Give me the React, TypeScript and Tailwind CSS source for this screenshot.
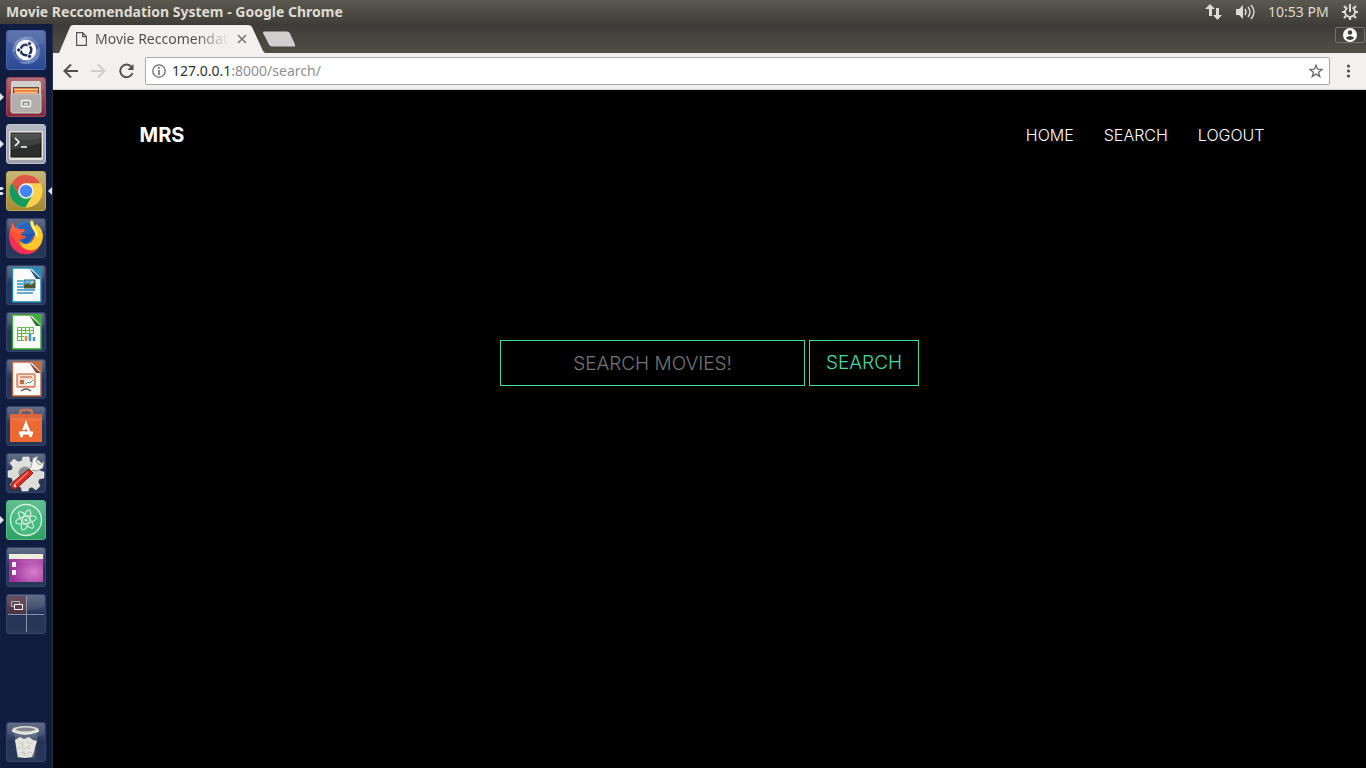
import type { ReactNode } from 'react';

type Launcher = { name: string; tile: string; art: ReactNode; running?: number; active?: boolean };

const dark = 'bg-linear-to-b from-[#56617d] via-[#25345a] to-[#293857] border-[#34456b]';

function Paper({ color, edge }: { color: string; edge: string }) {
  return (
    <>
      <path d="M6.5 3H27l8 9v25H6.5z" fill="#fafafa" stroke={color} strokeWidth="1.4" />
      <path d="M24 2h12v12z" fill={color} />
      <path d="M23 3l12 11h-5z" fill={edge} />
    </>
  );
}

const launchers: Launcher[] = [
  {
    name: 'Dash',
    tile: 'bg-linear-to-b from-[#526aa5] to-[#2b4995] border-[#4a66ac]',
    art: (
      <>
        <path d="M7 23C5 10 17 4 29 8 19 7 13 12 12 20zM33 17c4 14-9 21-21 15 10 1 15-3 17-11z" fill="#8fa8d5" opacity=".6" />
        <path d="M14 9c10-6 20 2 20 12-2-7-7-10-12-10zM26 31C15 36 6 28 6 18c3 8 8 10 13 11z" fill="#8fa8d5" opacity=".4" />
        <circle cx="20" cy="20" r="10.3" fill="#fff" />
        <circle cx="20" cy="20" r="5.3" fill="none" stroke="#1d3160" strokeWidth="2.5" strokeDasharray="9.6 1.5" strokeDashoffset="4.8" />
        <g fill="#1d3160" stroke="#fff" strokeWidth=".8">
          <circle cx="12.7" cy="20" r="2.1" />
          <circle cx="23.5" cy="13.7" r="2.1" />
          <circle cx="23.5" cy="26.3" r="2.1" />
        </g>
      </>
    ),
  },
  {
    name: 'Files',
    tile: 'bg-linear-to-b from-[#a9606d] to-[#83293c] border-[#a14958]',
    running: 1,
    art: (
      <>
        <path d="M7 4h26q2 0 2 3v28H5V7q0-3 2-3z" fill="#cfccc8" />
        <path d="M7 10h26v8H7z" fill="#5c3c2c" />
        <path d="M8 11h24v6H8z" fill="#e97831" />
        <path d="M8 12.5h24M9 15.5h22" stroke="#ffc68e" strokeWidth="1.2" />
        <path d="M5 17h30v17q0 2-2 2H7q-2 0-2-2z" fill="#b1aeab" stroke="#d0ccc7" />
        <rect x="15.5" y="23.5" width="9" height="6" rx="1" fill="#999" stroke="#f4f4f4" strokeWidth="1.4" />
        <path d="M18 27h4" stroke="#eee" strokeWidth="1.5" />
      </>
    ),
  },
  {
    name: 'Terminal',
    tile: 'bg-linear-to-b from-[#aeb2bc] to-[#9d9faa] border-[#bfc2c9]',
    running: 1,
    art: (
      <>
        <rect x="3" y="7" width="34" height="29" rx="2" fill="#e4e3df" />
        <rect x="5" y="9" width="30" height="24" fill="#2b2d2d" stroke="#111" />
        <path d="M5 9h30v10L5 26z" fill="#fff" opacity=".1" />
        <path d="M9 14l4 4-4 4M15 23h6" fill="none" stroke="#fff" strokeWidth="1.6" />
      </>
    ),
  },
  {
    name: 'Google Chrome',
    tile: 'bg-linear-to-b from-[#c0b06f] to-[#a58a32] border-[#c1a957]',
    running: 2,
    active: true,
    art: (
      <>
        <circle cx="20" cy="20" r="16.5" fill="#fbd04b" />
        <path d="M5.7 11.7A16.5 16.5 0 0 1 34.5 12.5H20L13 24z" fill="#df4938" />
        <path d="M5.7 11.7A16.5 16.5 0 0 0 19.5 36.5L27 24H13z" fill="#159b5c" />
        <path d="M20 12.5h14.5A16.5 16.5 0 0 1 19.5 36.5L27 23z" fill="#fbd04b" />
        <circle cx="20" cy="20" r="7.7" fill="#f4f4ee" />
        <circle cx="20" cy="20" r="6.2" fill="#4285f4" />
      </>
    ),
  },
  {
    name: 'Firefox',
    tile: dark,
    art: (
      <>
        <circle cx="20" cy="17" r="13" fill="#1478d4" />
        <path d="M12 8q7-5 14-2l3 11-9 9-7-6z" fill="#1d55b0" />
        <path d="M6 4l-1 6C2 15 3 23 5 27c4 7 11 10 17 9 8-1 13-7 14-15l-9-4c0 7-4 10-9 9-3-1-4-3-4-5 2 1 4 0 6-2-1-2-3-1-5-2 0-2 2-3 4-4-1-2-3-2-6-2-2-1-4-1-5-4z" fill="#ff5230" />
        <path d="M4 14c-2 8 1 16 6 19 6 4 13 4 18 1-9 0-18-7-24-20z" fill="#f52e57" />
        <path d="M26 2c-3 5 1 8 3 12 1 6-3 12-10 12-2 0-4-1-5-3 0 6 5 9 11 9 8 0 12-7 12-15-1-6-4-9-7-11l-1 3z" fill="#ffc72b" />
        <path d="M26 3c-2 6 6 9 5 16" stroke="#fff04e" strokeWidth="3" fill="none" />
      </>
    ),
  },
  {
    name: 'LibreOffice Writer',
    tile: dark,
    art: (
      <>
        <Paper color="#1783af" edge="#124d70" />
        <path d="M11 16h6M11 19h6M11 22h6M11 25h18M11 28h16" stroke="#3390bb" strokeWidth="1.5" />
        <path d="M18 15h11v8H18z" fill="#69b7df" stroke="#25617f" />
        <path d="M18 23v-3l4-2 3 2 4-3v6z" fill="#4b592d" />
        <circle cx="26" cy="17" r="1" fill="#ffe86b" />
      </>
    ),
  },
  {
    name: 'LibreOffice Calc',
    tile: dark,
    art: (
      <>
        <Paper color="#32a52c" edge="#17691c" />
        <path d="M11.5 15.5h16v13h-16zM11 18.5h17M11 21.5h17M11 24.5h17M15.5 15v13M19.5 15v13M23.5 15v13" fill="#eef8e9" stroke="#62b64a" />
        <path d="M18 22h12v8H18z" fill="#f6f8f6" />
        <path d="M20 24v5" stroke="#e48838" strokeWidth="2.5" />
        <path d="M24 22v7" stroke="#3b98d0" strokeWidth="2.5" />
        <path d="M28 25v4" stroke="#5292b6" strokeWidth="2.5" />
      </>
    ),
  },
  {
    name: 'LibreOffice Impress',
    tile: dark,
    art: (
      <>
        <Paper color="#b66039" edge="#753a23" />
        <rect x="11" y="15" width="18" height="13" rx="1" fill="#f5ddcf" stroke="#d17a50" strokeWidth="1.4" />
        <path d="M14 18h12" stroke="#b75c32" />
        <path d="M14 21h4v4h-4z" fill="#bd6a45" />
        <path d="M20 21h7v5h-7z" fill="#fff" />
        <path d="M20 25l2-2 2 1 3-3" stroke="#3b9b6e" fill="none" />
        <path d="M15 32q5-4 10 0" stroke="#5a5a5a" fill="none" strokeWidth="1.3" />
      </>
    ),
  },
  {
    name: 'Ubuntu Software',
    tile: dark,
    art: (
      <>
        <path d="M14 11V7q0-3 3-3h6q3 0 3 3v4" fill="none" stroke="#cf6741" strokeWidth="2.4" />
        <path d="M4 8h32v28H4z" fill="#ec6a31" />
        <path d="M4 8h32v4H4z" fill="#d95830" />
        <path d="M15 31l5-13 5 13M13 27h14" fill="none" stroke="#fff" strokeWidth="2.8" />
        <path d="M13 24.5h8" stroke="#ec6a31" />
      </>
    ),
  },
  {
    name: 'System Settings',
    tile: dark,
    art: (
      <>
        <path d="M17 4h6l1 5 4 1 4-3 4 4-3 4 1 3 4 1v6l-5 1-1 3 2 4-4 4-4-3-3 1-1 3h-6l-1-4-4-1-3 3-4-4 3-4-1-3-4-1v-6l4-1 1-3-3-4 4-4 4 3 4-1z" fill="#deded9" stroke="#fff" strokeWidth=".5" />
        <circle cx="19" cy="20" r="6.5" fill="#8b8d94" />
        <path d="M25 14l2-9 5-2-2 6 4 3 4-4-1 7-6 3-4-1-3 3-3-3z" fill="#f1f1ee" stroke="#777" strokeWidth=".7" />
        <path d="M23 16l4 4L10 36q-4 1-5-3 0-2 2-4z" fill="#d92c24" stroke="#801712" />
        <path d="M22 19L8 32" stroke="#ff8279" strokeWidth="1.4" />
        <circle cx="9" cy="33" r="1.2" fill="#eee" />
      </>
    ),
  },
  {
    name: 'Atom',
    tile: 'bg-linear-to-b from-[#53b988] to-[#2fa165] border-[#4fbd84]',
    running: 1,
    art: (
      <>
        <circle cx="20" cy="20" r="15.5" fill="#45b981" stroke="#d7f3de" strokeWidth="1.3" />
        <g fill="none" stroke="#d7f3de" strokeWidth="1.1">
          <ellipse cx="20" cy="20" rx="10.5" ry="3.6" transform="rotate(-12 20 20)" />
          <ellipse cx="20" cy="20" rx="10.5" ry="3.6" transform="rotate(48 20 20)" />
          <ellipse cx="20" cy="20" rx="10.5" ry="3.6" transform="rotate(108 20 20)" />
        </g>
        <circle cx="20" cy="20" r="1.5" fill="#e7fbec" />
      </>
    ),
  },
  {
    name: 'Desktop window',
    tile: dark,
    art: (
      <>
        <defs>
          <radialGradient id="wallpaper" cx=".72" cy=".65" r=".65">
            <stop stopColor="#d87fcc" />
            <stop offset="1" stopColor="#9b3399" />
          </radialGradient>
        </defs>
        <path d="M3 7h34v28H3z" fill="url(#wallpaper)" />
        <path d="M3 7h34v5H3z" fill="#eeecd8" />
        <path d="M6 15h4v5H6zM6 23h4v5H6z" fill="#faf1fa" />
      </>
    ),
  },
  {
    name: 'Workspace Switcher',
    tile: dark,
    art: (
      <>
        <path d="M2 2h18v18H2z" fill="#5d3441" opacity=".75" />
        <path d="M20.5 2v36M2 20.5h36" stroke="#8a94a7" />
        <path d="M5.5 7.5h8v5h-8z" fill="none" stroke="#aaa" />
        <path d="M8.5 10.5h8v5h-8z" fill="#4d303c" stroke="#fff" />
      </>
    ),
  },
];

const trash: Launcher = {
  name: 'Trash',
  tile: dark,
  art: (
    <>
      <path d="M8 9h24l-3 27H11z" fill="#858e99" opacity=".4" />
      <path d="M9 18l5-3 4 2 5-2 4 3 4 1-2 6-1 5-2 5-7 1-7-1-1-5z" fill="#e5e4df" />
      <path d="M12 20l3 2 3-2M20 19l3 3 4-2M12 26l3-1 2 3 4-3 4 2M14 31l3-1 2 3 4-3 3 1M17 22v3M24 23l-2 4M18 30v4" stroke="#bdbebb" strokeWidth=".8" fill="none" />
      <ellipse cx="19.5" cy="8" rx="13.5" ry="4" fill="#d7d8d2" />
      <ellipse cx="19.5" cy="7.4" rx="9.5" ry="1.8" fill="#777c81" />
      <path d="M6 9q13 6 27 0" stroke="#f4f4ee" strokeWidth="1.3" fill="none" />
    </>
  ),
};

function LauncherButton({ item }: { item: Launcher }) {
  return (
    <div className="relative px-1.5">
      {item.running && (
        <svg className="absolute left-0 top-4 h-2 w-1" viewBox="0 0 4 8" fill="#dfe3ea" aria-hidden="true">
          {item.running === 2 ? <path d="M0 0h2l2 1.5L2 3H0zM0 5h2l2 1.5L2 8H0z" /> : <path d="M0 0l4 4-4 4z" />}
        </svg>
      )}
      <button aria-label={item.name} className={`block size-10 overflow-hidden rounded-[3px] border ${item.tile}`}>
        <svg className="-m-px size-10" viewBox="0 0 40 40" aria-hidden="true">
          {item.art}
          <path d="M2 1h36v12Q20 20 2 12z" fill="#fff" opacity=".08" />
        </svg>
      </button>
      {item.active && (
        <svg className="absolute right-0 top-4 h-2 w-1" viewBox="0 0 4 8" fill="#dfe3ea" aria-hidden="true">
          <path d="M4 0L0 4l4 4z" />
        </svg>
      )}
    </div>
  );
}

function SystemBar() {
  return (
    <header className="flex h-6 items-center justify-between bg-linear-to-b from-[#5b594f] to-[#3f3e39] pl-1.5 pr-2 text-[#dfdbd2]">
      <h1 className="whitespace-nowrap text-sm font-bold">Movie Reccomendation System - Google Chrome</h1>
      <div className="flex items-center">
        <button aria-label="Network">
          <svg className="h-4 w-[18px]" viewBox="0 0 18 16" fill="currentColor">
            <path d="M5 0l5 5H7v7H4V5H0z" />
            <path d="M11 4h3v7h3l-4.5 5L8 11h3z" />
          </svg>
        </button>
        <button aria-label="Volume" className="ml-3">
          <svg className="h-4 w-[21px]" viewBox="0 0 21 16" fill="none" stroke="currentColor">
            <path d="M1 5h3l4-4v14l-4-4H1z" fill="currentColor" stroke="none" />
            <path d="M10 5q2 3 0 6" strokeWidth="1.4" />
            <path d="M13 3q4 5 0 10" strokeWidth="1.4" />
            <path d="M16 1q6 7 0 14" strokeWidth="1.4" />
          </svg>
        </button>
        <time className="ml-3 w-[62px] whitespace-nowrap text-sm">10:53 PM</time>
        <button aria-label="Session" className="ml-3">
          <svg className="size-4" viewBox="0 0 16 16" fill="none" stroke="currentColor">
            <path d="M5.5 3.6a5 5 0 1 0 5 0" strokeWidth="1.8" />
            <path d="M8 0v8" strokeWidth="2" />
            <path d="M2 2l2 2M14 2l-2 2M0 8h3M13 8h3M2 14l2-2M14 14l-2-2M8 13v3" strokeWidth="2.2" />
          </svg>
        </button>
      </div>
    </header>
  );
}

function TabStrip() {
  return (
    <div className="flex h-[29px] justify-between bg-linear-to-b from-[#3d3c38] to-[#514e47]">
      <div className="flex">
        <div className="relative ml-1.5 w-[206px]">
          <svg className="absolute inset-0 size-full" viewBox="0 0 206 29" preserveAspectRatio="none" aria-hidden="true">
            <path d="M0 29L11 3Q12 1 14 1H189Q192 1 193 3L204 27 206 29z" fill="#f2f1f0" />
          </svg>
          <div className="relative flex h-full items-center pl-[17px]">
            <svg className="h-3.5 w-[11px] shrink-0" viewBox="0 0 11 14" fill="none" stroke="#555" strokeWidth="1.2" aria-hidden="true">
              <path d="M.6.6h6l3.8 4v8.8H.6zM6.6.6v4h3.8" />
            </svg>
            <span className="ml-2 w-[134px] overflow-hidden whitespace-nowrap bg-linear-to-r from-[#4e4e4e] from-75% to-transparent bg-clip-text text-sm text-transparent">
              Movie Reccomendation
            </span>
            <button aria-label="Close tab" className="ml-2 size-2.5">
              <svg className="size-2.5" viewBox="0 0 10 10" stroke="#777" strokeWidth="1.6"><path d="M1 1l8 8M9 1L1 9" /></svg>
            </button>
          </div>
        </div>
        <button aria-label="New tab" className="-ml-0.5 self-center">
          <svg className="h-4 w-8" viewBox="0 0 32 16"><path d="M1 .5h23q2 0 3 2l5 11q1 2-1 2H9q-2 0-3-2L0 2Q0 .5 1 .5z" fill="#d0cfcd" /></svg>
        </button>
      </div>
      <button aria-label="Profile" className="mr-px mt-[3px] flex h-4 w-[30px] items-center justify-center rounded-xs border border-[#74726c]">
        <svg className="size-3.5" viewBox="0 0 14 14">
          <circle cx="7" cy="7" r="7" fill="#fff" />
          <circle cx="7" cy="4.5" r="2.2" fill="#3f3e3a" />
          <path d="M2.7 10Q7 5.8 11.3 10 7 14 2.7 10z" fill="#3f3e3a" />
        </svg>
      </button>
    </div>
  );
}

function Toolbar() {
  return (
    <div className="flex h-[37px] items-center border-b border-[#cfcecc] bg-[#f2f1f0] pl-2.5 pr-3.5">
      <button aria-label="Back">
        <svg className="h-4 w-[15px]" viewBox="0 0 15 16" fill="none" stroke="#505050" strokeWidth="2"><path d="M15 8H2M8 1.5L1.5 8 8 14.5" /></svg>
      </button>
      <button aria-label="Forward" className="ml-[13px]">
        <svg className="h-4 w-[15px]" viewBox="0 0 15 16" fill="none" stroke="#cfcecd" strokeWidth="2"><path d="M0 8h13M7 1.5L13.5 8 7 14.5" /></svg>
      </button>
      <button aria-label="Reload" className="ml-[13px]">
        <svg className="h-4 w-[15px]" viewBox="0 0 15 16" fill="none"><path d="M12.5 4A6.3 6.3 0 1 0 13.5 10" stroke="#505050" strokeWidth="2" /><path d="M14.5 1v6h-6z" fill="#505050" /></svg>
      </button>
      <div className="ml-[11px] flex h-7 grow items-center rounded-xs border border-[#aaa9a7] bg-white px-1.5">
        <svg className="size-3.5" viewBox="0 0 14 14" fill="none" stroke="#6b6b6b" strokeWidth="1.3" aria-hidden="true">
          <circle cx="7" cy="7" r="6.2" /><path d="M7 6v5M7 3v1.7" strokeWidth="1.6" />
        </svg>
        <a href="#search" aria-label="Page address" className="ml-1.5 grow whitespace-nowrap text-sm text-[#909090]">
          <span className="text-[#333]">127.0.0.1</span>:8000/search/
        </a>
        <button aria-label="Bookmark">
          <svg className="size-3.5" viewBox="0 0 14 14" fill="none" stroke="#696969" strokeWidth="1.3"><path d="M7 1.2l1.6 4 4.4.2-3.4 2.8 1.2 4.3L7 10.1l-3.8 2.4 1.2-4.3L1 5.4l4.4-.2z" /></svg>
        </button>
      </div>
      <button aria-label="Menu" className="ml-[15px]">
        <svg className="h-3.5 w-[7px]" viewBox="0 0 7 14" fill="#505050"><circle cx="3.5" cy="2" r="1.6" /><circle cx="3.5" cy="7" r="1.6" /><circle cx="3.5" cy="12" r="1.6" /></svg>
      </button>
    </div>
  );
}

function MoviePage() {
  return (
    <main className="grow bg-black font-['Inter',sans-serif] text-white">
      <nav className="mx-auto flex h-[90px] max-w-[1140px] items-center justify-between pr-[15px]">
        <a href="#home" className="text-xl font-bold">MRS</a>
        <div className="flex gap-[30px] text-base font-light">
          <a href="#home">HOME</a>
          <a href="#search">SEARCH</a>
          <a href="#logout">LOGOUT</a>
        </div>
      </nav>
      <form className="flex justify-center gap-1 pt-40 text-[19px] font-light" onSubmit={(e) => e.preventDefault()}>
        <input aria-label="Search movies" placeholder="SEARCH MOVIES!" className="h-[46px] w-[305px] border border-[#42dca3] text-center outline-none placeholder:text-[#757575]" />
        <button className="h-[46px] w-[110px] border border-[#42dca3] text-[#42dca3]">SEARCH</button>
      </form>
    </main>
  );
}

export default function App() {
  return (
    <div className="flex min-h-screen flex-col bg-black font-['Noto_Sans',sans-serif]">
      <SystemBar />
      <div className="flex grow">
        <aside className="flex w-[53px] shrink-0 flex-col gap-[7px] border-r border-[#29303f] bg-[#101d41] pb-1.5 pt-1.5">
          {launchers.map((item) => <LauncherButton key={item.name} item={item} />)}
          <div className="mt-auto"><LauncherButton item={trash} /></div>
        </aside>
        <div className="flex min-w-0 grow flex-col">
          <TabStrip />
          <Toolbar />
          <MoviePage />
        </div>
      </div>
    </div>
  );
}
